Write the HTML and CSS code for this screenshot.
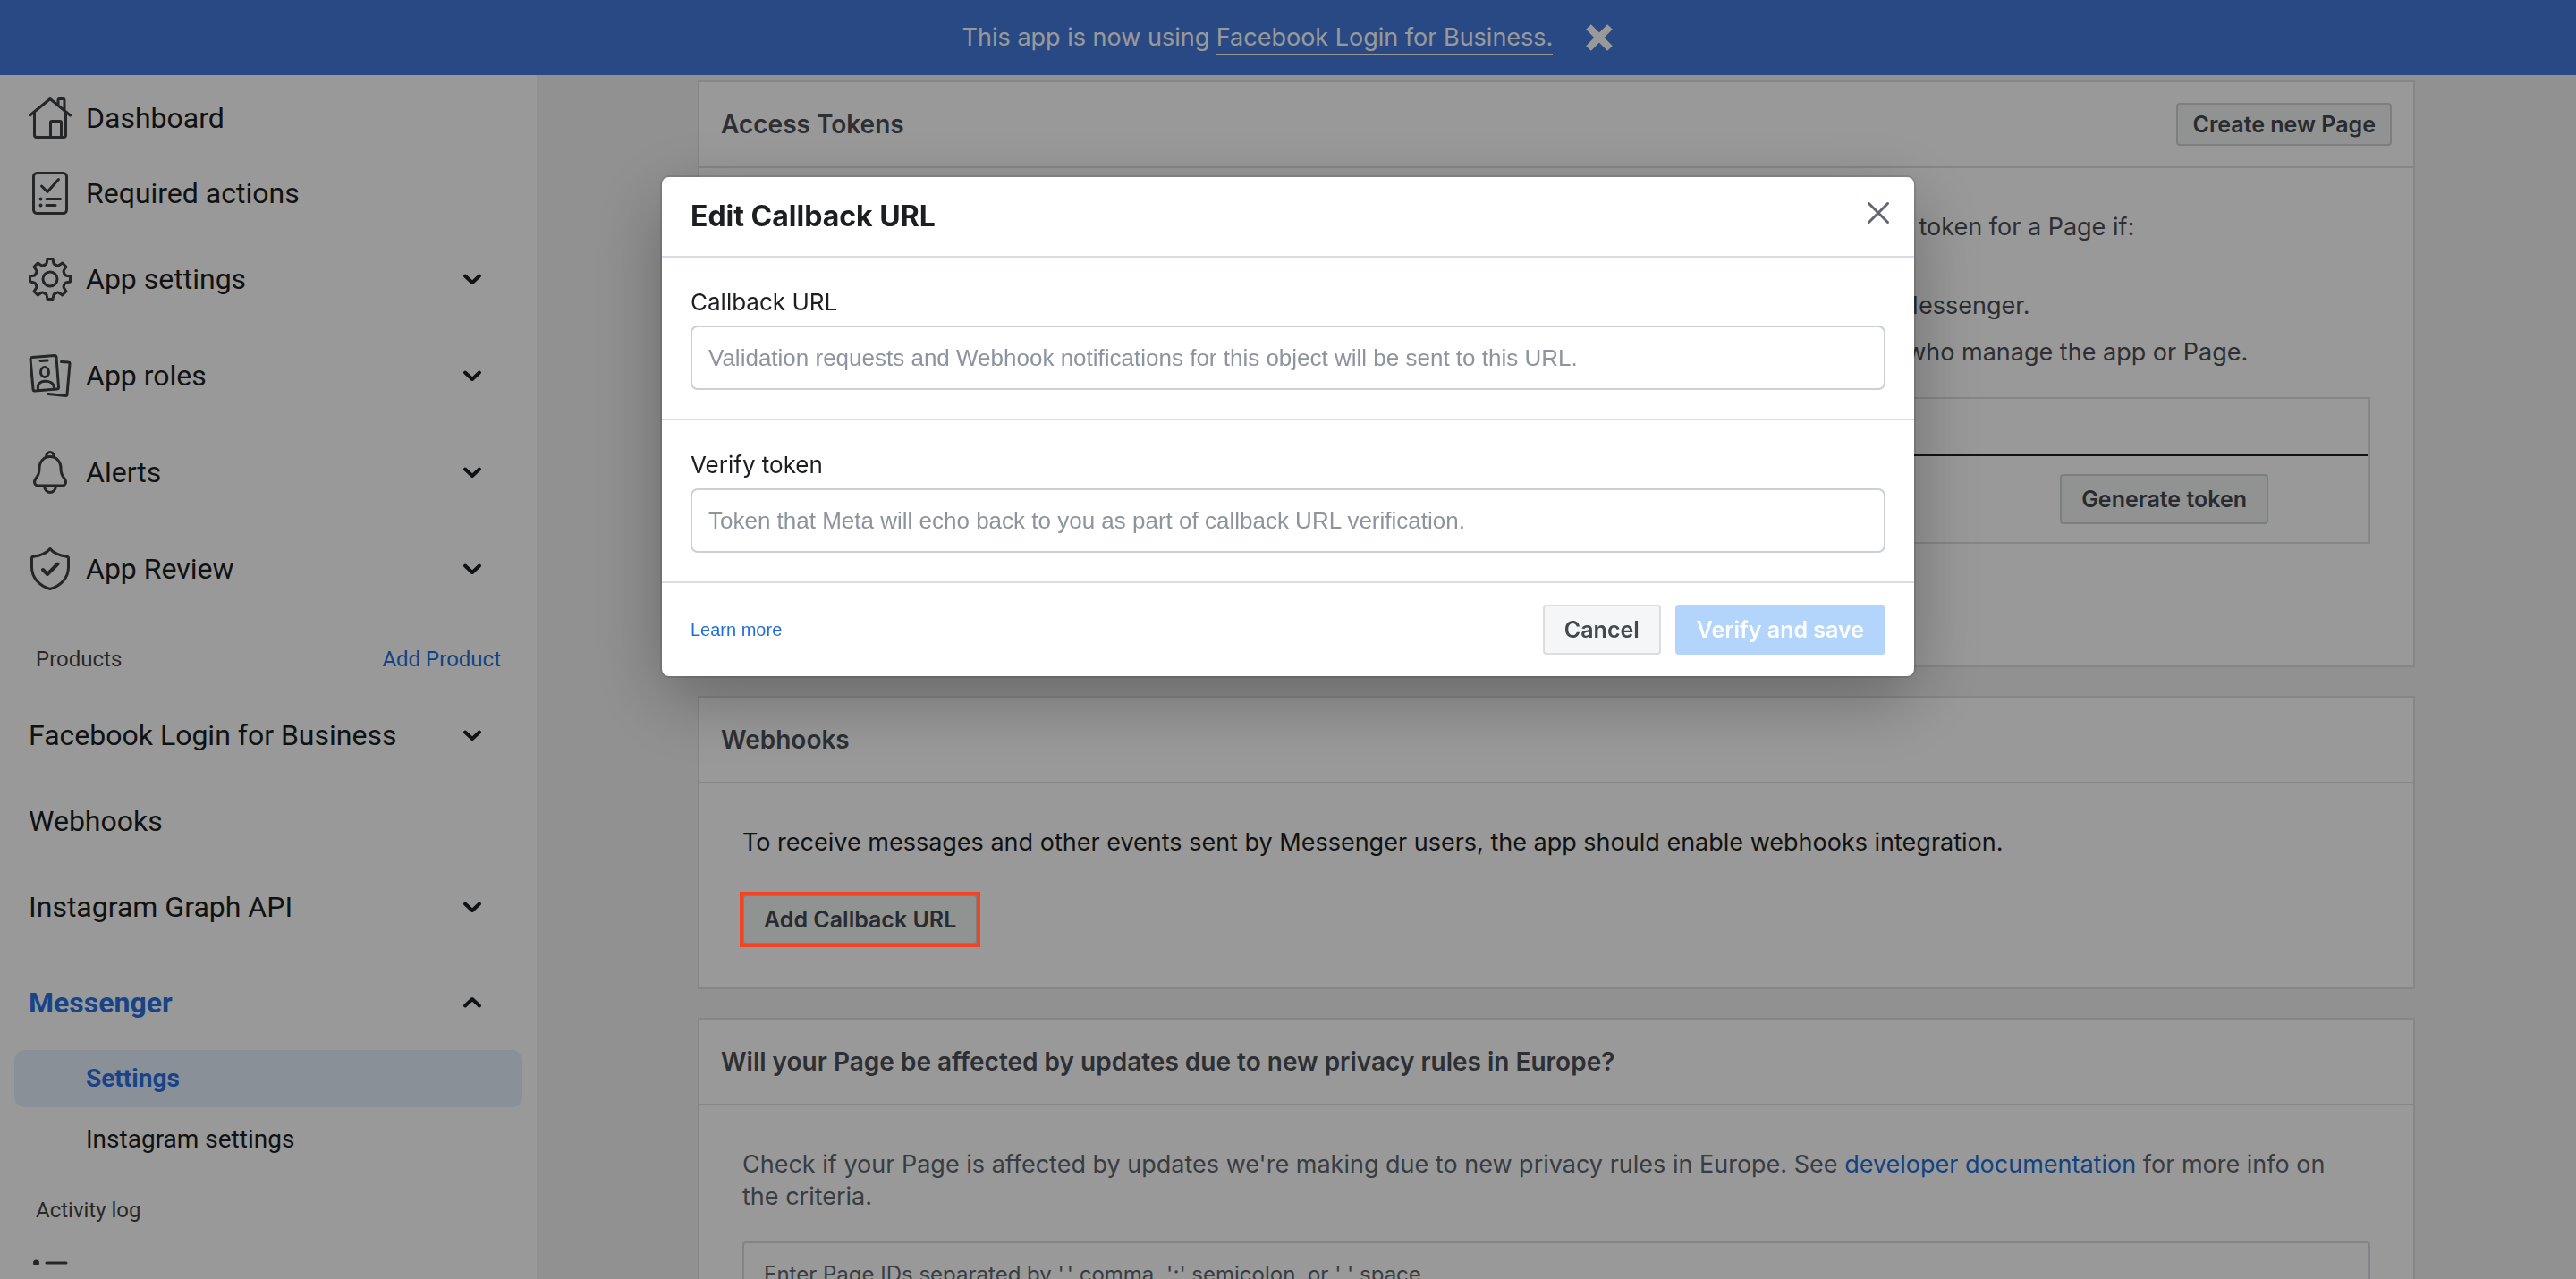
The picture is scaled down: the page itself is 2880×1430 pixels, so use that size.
FILE: index.html
```html
<!DOCTYPE html>
<html lang="en">
<head>
<meta charset="utf-8">
<title>Messenger settings</title>
<link rel="stylesheet" href="styles.css">
</head>
<body>
<svg class="sprite" aria-hidden="true">
  <symbol id="chevron" viewBox="0 0 24 24"><path d="M4 8.500 12 16l8-7.500" stroke-width="4"/></symbol>
  <symbol id="tooth" viewBox="-24 -24 48 48" overflow="visible"><path d="M-6.500-15.700Q-4-16.500-3.700-18.500L-3-22.500H3L3.700-18.500Q4-16.500 6.500-15.700"/></symbol>
</svg>

<div class="app">
  <header class="banner">
    <p class="banner-text">This app is now using <a class="banner-link" href="#">Facebook Login for Business.</a></p>
    <button class="banner-close" type="button" aria-label="Dismiss">
      <svg class="banner-icon" viewBox="0 0 32 32"><path d="M4 4 28 28M28 4 4 28"/></svg>
    </button>
  </header>

  <div class="shell">
    <nav class="sidebar" aria-label="App">
      <a class="nav-row nav-row-plain" href="#">
        <svg class="nav-icon" viewBox="0 0 48 48"><path d="M1.500 21 24 2.500 46.500 21M6.500 18v25a2.500 2.500 0 0 0 2.500 2.500h30a2.500 2.500 0 0 0 2.500-2.500V18M33 9V4a1.500 1.500 0 0 1 1.500-1.500h4A1.500 1.500 0 0 1 40 4v11M24.500 45V29a1.500 1.500 0 0 1 1.500-1.500h9a1.500 1.500 0 0 1 1.500 1.500v16"/></svg>
        <span class="nav-label">Dashboard</span>
      </a>
      <a class="nav-row nav-row-plain" href="#">
        <svg class="nav-icon" viewBox="0 0 48 48"><rect x="5.500" y="1.500" width="37" height="45" rx="4"/><path d="M14.500 16 21 22.500 33.500 8.500M20 30.500h15.500M20 37.500h10"/><path d="M13.500 30.500h0M13.500 37.500h0" stroke-width="4"/></svg>
        <span class="nav-label">Required actions</span>
      </a>
      <a class="nav-row" href="#">
        <svg class="nav-icon" viewBox="-24 -24 48 48"><circle r="8"/>
          <use href="#tooth" x="-24" y="-24" width="48" height="48"/>
          <use href="#tooth" x="-24" y="-24" width="48" height="48" transform="rotate(45)"/>
          <use href="#tooth" x="-24" y="-24" width="48" height="48" transform="rotate(90)"/>
          <use href="#tooth" x="-24" y="-24" width="48" height="48" transform="rotate(135)"/>
          <use href="#tooth" x="-24" y="-24" width="48" height="48" transform="rotate(180)"/>
          <use href="#tooth" x="-24" y="-24" width="48" height="48" transform="rotate(225)"/>
          <use href="#tooth" x="-24" y="-24" width="48" height="48" transform="rotate(270)"/>
          <use href="#tooth" x="-24" y="-24" width="48" height="48" transform="rotate(315)"/>
        </svg>
        <span class="nav-label">App settings</span>
        <svg class="chevron"><use href="#chevron"/></svg>
      </a>
      <a class="nav-row" href="#">
        <svg class="nav-icon" viewBox="0 0 48 48"><path d="M4 3.500 29 1.500a2 2 0 0 1 2 2L33.500 37a2 2 0 0 1-2 2L7 41a2 2 0 0 1-2-2L2 5.500a2 2 0 0 1 2-2ZM36.500 8.500l8 .500a1.500 1.500 0 0 1 1.500 1.500L43 45a1.500 1.500 0 0 1-1.500 1.500L22 44.500M13 7.500l8-.500M10.500 39c-1-5 2-8.500 7.500-8.800s10 2.300 10.500 7.300"/><ellipse cx="18" cy="20" rx="4.500" ry="5.500"/></svg>
        <span class="nav-label">App roles</span>
        <svg class="chevron"><use href="#chevron"/></svg>
      </a>
      <a class="nav-row" href="#">
        <svg class="nav-icon" viewBox="0 0 48 48"><path d="M24 6.500c-7 0-12 5.500-12 13 0 6-1.500 8-4 11.500-1.500 2-2 4-1 6 .700 1.300 2 2 3.500 2h27c1.500 0 2.800-.700 3.500-2 1-2 .500-4-1-6-2.500-3.500-4-5.500-4-11.500 0-7.500-5-13-12-13ZM19.500 6.500c.500-3 2-5 4.500-5s4 2 4.500 5M17.500 39.500c.500 4 3 7 6.500 7s6-3 6.500-7"/></svg>
        <span class="nav-label">Alerts</span>
        <svg class="chevron"><use href="#chevron"/></svg>
      </a>
      <a class="nav-row" href="#">
        <svg class="nav-icon" viewBox="0 0 48 48"><path d="M24 1.500C20.500 6 14 9 5.500 10.200A2 2 0 0 0 3.500 12v10c0 11.500 8 21 20.500 24.500C36.500 43 44.500 33.500 44.500 22V12a2 2 0 0 0-2-1.800C34 9 27.500 6 24 1.500Z"/><path d="M16 25l5 5L32.500 18.500" stroke-width="4"/></svg>
        <span class="nav-label">App Review</span>
        <svg class="chevron"><use href="#chevron"/></svg>
      </a>

      <div class="nav-heading">
        <span>Products</span>
        <a class="nav-add" href="#">Add Product</a>
      </div>
      <a class="nav-row" href="#">
        <span class="nav-label">Facebook Login for Business</span>
        <svg class="chevron"><use href="#chevron"/></svg>
      </a>
      <a class="nav-row nav-row-plain" href="#"><span class="nav-label">Webhooks</span></a>
      <a class="nav-row" href="#">
        <span class="nav-label">Instagram Graph API</span>
        <svg class="chevron"><use href="#chevron"/></svg>
      </a>
      <a class="nav-row nav-row-open" href="#">
        <span class="nav-label">Messenger</span>
        <svg class="chevron chevron-up"><use href="#chevron"/></svg>
      </a>
      <div class="subnav">
        <a class="subnav-item subnav-item-active" href="#" aria-current="page">Settings</a>
        <a class="subnav-item" href="#">Instagram settings</a>
      </div>

      <div class="nav-heading"><span>Activity log</span></div>
      <a class="nav-row nav-row-plain" href="#">
        <svg class="nav-icon" viewBox="0 0 48 48"><path d="M20 10h22M20 24h22M20 38h22"/><path d="M8.500 10h0M8.500 24h0M8.500 38h0" stroke-width="7"/></svg>
        <span class="nav-label">Activity log</span>
      </a>
    </nav>

    <main class="main">
      <div class="content">
        <section class="card">
          <header class="card-header">
            <h2 class="card-title">Access Tokens</h2>
            <button class="button button-small" type="button">Create new Page</button>
          </header>
          <div class="card-body">
            <p class="text">Generate a Page access token to begin using the platform APIs. You will be able to generate an access token for a Page if:</p>
            <ol class="rules">
              <li>You are one of the Page admins, or the app has been granted permission to manage the Page in Messenger.</li>
              <li>The app has Standard Access, the app is in development mode, and you are one of those people who manage the app or Page.</li>
            </ol>
            <table class="tokens">
              <thead>
                <tr><th scope="col">Pages</th><th scope="col">Tokens</th><th aria-label="Actions"></th></tr>
              </thead>
              <tbody>
                <tr><td>No Page</td><td>-</td><td class="tokens-action"><button class="button" type="button">Generate token</button></td></tr>
              </tbody>
            </table>
            <button class="button" type="button">Add or remove Pages</button>
          </div>
        </section>

        <section class="card">
          <header class="card-header"><h2 class="card-title">Webhooks</h2></header>
          <div class="card-body">
            <p class="text text-strong">To receive messages and other events sent by Messenger users, the app should enable webhooks integration.</p>
            <div class="callout">
              <button class="button" type="button">Add Callback URL</button>
              <span class="callout-ring"></span>
            </div>
          </div>
        </section>

        <section class="card">
          <header class="card-header"><h2 class="card-title">Will your Page be affected by updates due to new privacy rules in Europe?</h2></header>
          <div class="card-body">
            <p class="text text-muted">Check if your Page is affected by updates we're making due to new privacy rules in Europe. See <a class="link" href="#">developer documentation</a> for more info on the&nbsp;criteria.</p>
            <input class="page-ids" type="text" aria-label="Page IDs" placeholder="Enter Page IDs separated by ',' comma, ';' semicolon, or ' ' space">
          </div>
        </section>
      </div>
    </main>
  </div>
</div>

<div class="overlay">
  <form class="modal" role="dialog" aria-modal="true" aria-labelledby="modal-title">
    <header class="modal-header">
      <h1 class="modal-title" id="modal-title">Edit Callback URL</h1>
      <button class="modal-close" type="button" aria-label="Close">
        <svg class="modal-close-icon" viewBox="0 0 24 24"><path d="M1.500 1.500l21 21M22.500 1.500l-21 21"/></svg>
      </button>
    </header>
    <div class="field">
      <label class="field-label" for="callback">Callback URL</label>
      <input class="field-input" id="callback" type="text" placeholder="Validation requests and Webhook notifications for this object will be sent to this URL.">
    </div>
    <div class="field">
      <label class="field-label" for="token">Verify token</label>
      <input class="field-input" id="token" type="text" placeholder="Token that Meta will echo back to you as part of callback URL verification.">
    </div>
    <footer class="modal-footer">
      <a class="learn-more" href="#">Learn more</a>
      <div class="modal-actions">
        <button class="button" type="button">Cancel</button>
        <button class="button button-primary" type="submit" disabled>Verify and save</button>
      </div>
    </footer>
  </form>
</div>
</body>
</html>
```
FILE: styles.css
```css
*,
*::before,
*::after {
  box-sizing: border-box;
}

body,
h1,
h2,
p,
ol {
  margin: 0;
}

body {
  background: #f2f2f2;
  color: #1c1e21;
  font-family: Inter, "Liberation Sans", sans-serif;
  font-size: 27px;
  line-height: 36px;
}

a {
  color: inherit;
  text-decoration: none;
}

button,
input {
  font: inherit;
}

button {
  cursor: pointer;
}

svg {
  fill: none;
  stroke: currentColor;
  stroke-linecap: round;
  stroke-linejoin: round;
}

.sprite {
  display: none;
}

.app {
  display: flex;
  flex-direction: column;
  height: 100vh;
}

/* Notice bar */

.banner {
  display: flex;
  justify-content: center;
  align-items: center;
  gap: 36px;
  min-height: 84px;
  background: #437bdd;
  color: #fff;
}

.banner-link {
  padding-bottom: 2px;
  border-bottom: 2px solid;
}

.banner-close {
  display: flex;
  padding: 0;
  border: 0;
  background: none;
  color: inherit;
}

.banner-icon {
  width: 32px;
  height: 32px;
  stroke-width: 8;
  stroke-linecap: butt;
}

.shell {
  display: flex;
  flex: 1;
  min-height: 0;
}

/* Sidebar */

.sidebar {
  flex: none;
  width: 600px;
  overflow: auto;
  scrollbar-width: none;
  padding: 6px 16px 0;
  border-bottom: 16px solid #fff;
  background: #fff;
  font-family: Roboto, "Liberation Sans", sans-serif;
  font-size: 32px;
}

.nav-row {
  display: flex;
  align-items: center;
  gap: 16px;
  height: 108px;
  padding: 0 44px 0 16px;
}

.nav-row-plain {
  height: 84px;
}

.nav-row-open {
  height: 106px;
}

.nav-row-open .nav-label {
  color: #2a71e4;
  font-weight: 700;
}

.nav-label {
  flex: 1;
}

.nav-icon {
  flex: none;
  width: 48px;
  height: 48px;
  color: #3e4042;
  stroke-width: 3;
}

.chevron {
  width: 24px;
  height: 24px;
}

.chevron-up {
  transform: rotate(180deg);
}

.nav-heading {
  display: flex;
  justify-content: space-between;
  align-items: center;
  height: 78px;
  padding: 16px 24px 0;
  color: #444;
  font-size: 24px;
}

.nav-add {
  color: #216fdb;
}

.subnav {
  display: flex;
  flex-direction: column;
  gap: 4px;
}

.subnav-item {
  display: flex;
  align-items: center;
  height: 64px;
  padding: 0 80px;
  border-radius: 12px;
  font-size: 28px;
}

.subnav-item-active {
  background: #e7f0fe;
  color: #2a71e4;
  font-weight: 700;
}

/* Page content */

.main {
  flex: 1;
  min-width: 0;
  overflow: auto;
  scrollbar-width: none;
  padding: 6px 48px;
}

.content {
  display: flex;
  flex-direction: column;
  gap: 32px;
  max-width: 1920px;
  margin: 0 auto;
}

.card {
  border: 2px solid #dfdfdf;
  background: #fff;
}

.card-header {
  display: flex;
  justify-content: space-between;
  align-items: center;
  height: 96px;
  padding: 0 24px;
  border-bottom: 2px solid #dfdfdf;
}

.card-title {
  color: #4b4f56;
  font-size: 28px;
  font-weight: 600;
}

.card-body {
  padding: 48px;
}

.text {
  color: #4b4f56;
}

.text-strong {
  color: #1c1e21;
}

.text-muted {
  color: #606770;
}

.link {
  color: #216fdb;
}

.rules {
  display: flex;
  flex-direction: column;
  gap: 16px;
  margin-top: 52px;
  padding-left: 60px;
  color: #4b4f56;
}

.tokens {
  width: 100%;
  margin: 32px 0;
  border: 2px solid #dfdfdf;
  border-spacing: 0;
  table-layout: fixed;
}

.tokens th,
.tokens td {
  padding: 0 24px;
  text-align: left;
}

.tokens th {
  height: 64px;
  border-bottom: 2px solid #1c1e21;
}

.tokens td {
  height: 96px;
}

.tokens .tokens-action {
  padding-right: 112px;
  text-align: right;
}

.tokens .button {
  display: inline-flex;
}

.button {
  display: flex;
  align-items: center;
  height: 56px;
  padding: 0 22px;
  border: 2px solid #dadde1;
  border-radius: 4px;
  background: #f5f6f7;
  color: #444950;
  font-size: 25px;
  font-weight: 600;
}

.button-small {
  height: 48px;
  padding: 0 16px;
}

.button-primary {
  border-color: #b3d4fb;
  background: #b3d4fb;
  color: #fff;
}

.callout {
  position: relative;
  width: fit-content;
  margin-top: 40px;
}

.card .button {
  border-color: #d0d4d4;
  background: #f2f5f4;
}

.callout-ring {
  position: absolute;
  z-index: 20;
  inset: -3px;
  border: 4px solid #f04423;
}

.page-ids {
  display: block;
  width: 100%;
  height: 72px;
  margin-top: 32px;
  padding: 0 22px;
  border: 2px solid #dadde1;
  border-radius: 4px;
  background: #fff;
  font-size: 24px;
}

.page-ids::placeholder {
  color: #606770;
}

/* Dialog */

.overlay {
  position: fixed;
  z-index: 10;
  inset: 0;
  padding: 198px 24px 24px;
  background: rgb(0 0 0 / 40%);
}

.modal {
  max-width: 1400px;
  margin: 0 auto;
  border-radius: 8px;
  background: #fff;
  box-shadow: 0 0 0 2px rgb(0 0 0 / 10%), 0 24px 80px rgb(0 0 0 / 30%);
}

.modal-header {
  display: flex;
  justify-content: space-between;
  align-items: center;
  height: 90px;
  padding: 0 28px 0 32px;
  border-bottom: 2px solid #dadde1;
}

.modal-title {
  font-size: 32px;
  font-weight: 700;
}

.modal-close {
  display: flex;
  padding: 0 0 8px;
  border: 0;
  background: none;
  color: #606770;
}

.modal-close-icon {
  width: 24px;
  height: 24px;
  stroke-width: 3;
}

.field {
  display: flex;
  flex-direction: column;
  gap: 8px;
  padding: 32px;
  border-bottom: 2px solid #dadde1;
}

.field-label {
  font-size: 26px;
}

.field-input {
  height: 72px;
  padding: 0 18px;
  border: 2px solid #ccd0d5;
  border-radius: 8px;
  background: #fff;
  color: #1c1e21;
  font-family: "Liberation Sans", sans-serif;
  font-size: 26px;
}

.field-input::placeholder {
  color: #8d949e;
}

.modal-footer {
  display: flex;
  justify-content: space-between;
  align-items: center;
  padding: 24px 32px;
}

.learn-more {
  color: #216fdb;
  font-family: "Liberation Sans", sans-serif;
  font-size: 20px;
}

.modal-actions {
  display: flex;
  gap: 16px;
}
```
